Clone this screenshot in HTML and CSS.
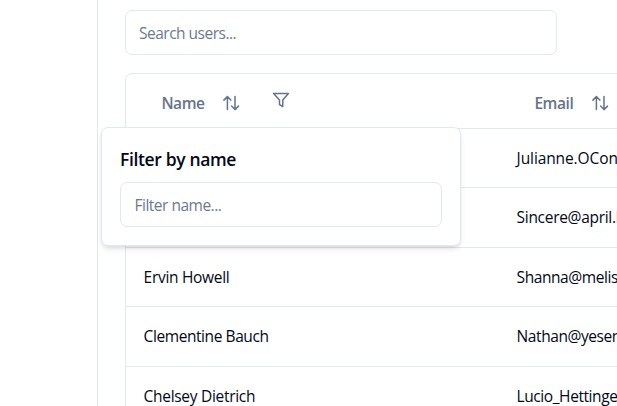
FILE: index.html
```html
<!DOCTYPE html>
<html lang="en">
<head>
<meta charset="utf-8">
<title>Users</title>
<link rel="stylesheet" href="styles.css">
</head>
<body>
<div class="layout">
  <aside class="sidebar"></aside>
  <main class="content">
    <input class="input search" type="text" placeholder="Search users...">
    <div class="table">
      <div class="row head">
        <div class="cell">
          <span class="label name">Name</span>
          <svg class="icon sort" viewBox="0 0 18 18"><path d="M1.9 6.1 5.4 2.6 8.8 6.1M5.4 2.6V15.6M9.6 12.1 13 15.6 16.5 12.1M13 15.6V2.6"/></svg>
          <svg class="icon funnel" viewBox="0 0 18 18"><path d="M1.6 2.4H16.4L10.8 9V15.5L7.5 13.7V9Z"/></svg>
          <div class="popover">
            <h4 class="title">Filter by name</h4>
            <input class="input filter" type="text" placeholder="Filter name...">
          </div>
        </div>
        <div class="cell">
          <span class="label email">Email</span>
          <svg class="icon sort" viewBox="0 0 18 18"><path d="M1.9 6.1 5.4 2.6 8.8 6.1M5.4 2.6V15.6M9.6 12.1 13 15.6 16.5 12.1M13 15.6V2.6"/></svg>
        </div>
      </div>
      <div class="row"><div class="cell"></div><div class="cell loose">Julianne.OConner@kory.org</div></div>
      <div class="row tall"><div class="cell"></div><div class="cell mid">Sincere@april.biz</div></div>
      <div class="row"><div class="cell mid">Ervin Howell</div><div class="cell">Shanna@melissa.tv</div></div>
      <div class="row tall"><div class="cell">Clementine Bauch</div><div class="cell">Nathan@yesenia.net</div></div>
      <div class="row"><div class="cell mid">Chelsey Dietrich</div><div class="cell">Lucio_Hettinger@annie.ca</div></div>
    </div>
  </main>
</div>
</body>
</html>
```
FILE: styles.css
```css
* { box-sizing: border-box; }
body {
  margin: 0;
  height: 406px;
  overflow: hidden;
  background: #fff;
  color: #020817;
  font: 15.5px/24px "Segoe UI", "Open Sans", sans-serif;
  letter-spacing: -0.42px;
}
.layout { display: flex; height: 406px; overflow: hidden; }
.sidebar { flex: 0 0 98px; border-right: 1px solid #e2e8f0; }
.content { flex: 0 0 auto; width: 800px; padding: 10px 0 0 27px; }
.input {
  display: block;
  height: 45px;
  padding: 0 13px;
  border: 1px solid #e2e8f0;
  border-radius: 7px;
  background: #fff;
  font: inherit;
  letter-spacing: -0.5px;
  outline: none;
}
.input::placeholder { color: #6b7a90; opacity: 1; }
.search { width: 432px; }
.table {
  margin-top: 18px;
  border: 1px solid #e2e8f0;
  border-radius: 7px;
}
.row {
  display: grid;
  grid-template-columns: 373px 1fr;
  height: 59px;
  border-bottom: 1px solid #e2e8f0;
}
.row.tall { height: 60px; }
.row.head { height: 55px; color: #64748b; font-weight: 600; }
.cell {
  position: relative;
  display: flex;
  align-items: center;
  padding-left: 17.6px;
  white-space: nowrap;
}
.tall .cell { padding-bottom: 2px; }
.mid { letter-spacing: -0.3px; }
.loose { letter-spacing: -0.1px; }
.head .cell { padding-left: 35.4px; padding-top: 4px; }
.label { flex: none; }
.name { width: 60.6px; }
.email { width: 56.6px; }
.icon {
  width: 18px;
  height: 18px;
  fill: none;
  stroke: #64748b;
  stroke-width: 1.5;
  stroke-linecap: round;
  stroke-linejoin: round;
}
.funnel { margin: -7px 0 0 32px; }
.popover {
  position: absolute;
  z-index: 2;
  top: 53px;
  left: -25px;
  width: 360px;
  height: 119px;
  padding: 19px 18px;
  border: 1px solid #e2e8f0;
  border-radius: 7px;
  background: #fff;
  box-shadow: 0 4px 6px -1px rgb(0 0 0 / 0.1), 0 2px 4px -2px rgb(0 0 0 / 0.1);
}
.title {
  margin: 0 0 11px;
  color: #020817;
  font-size: 17.5px;
  line-height: 24px;
  font-weight: 600;
  letter-spacing: -0.36px;
}
.filter { width: 322px; padding-left: 13.5px; font-weight: 400; }
```
